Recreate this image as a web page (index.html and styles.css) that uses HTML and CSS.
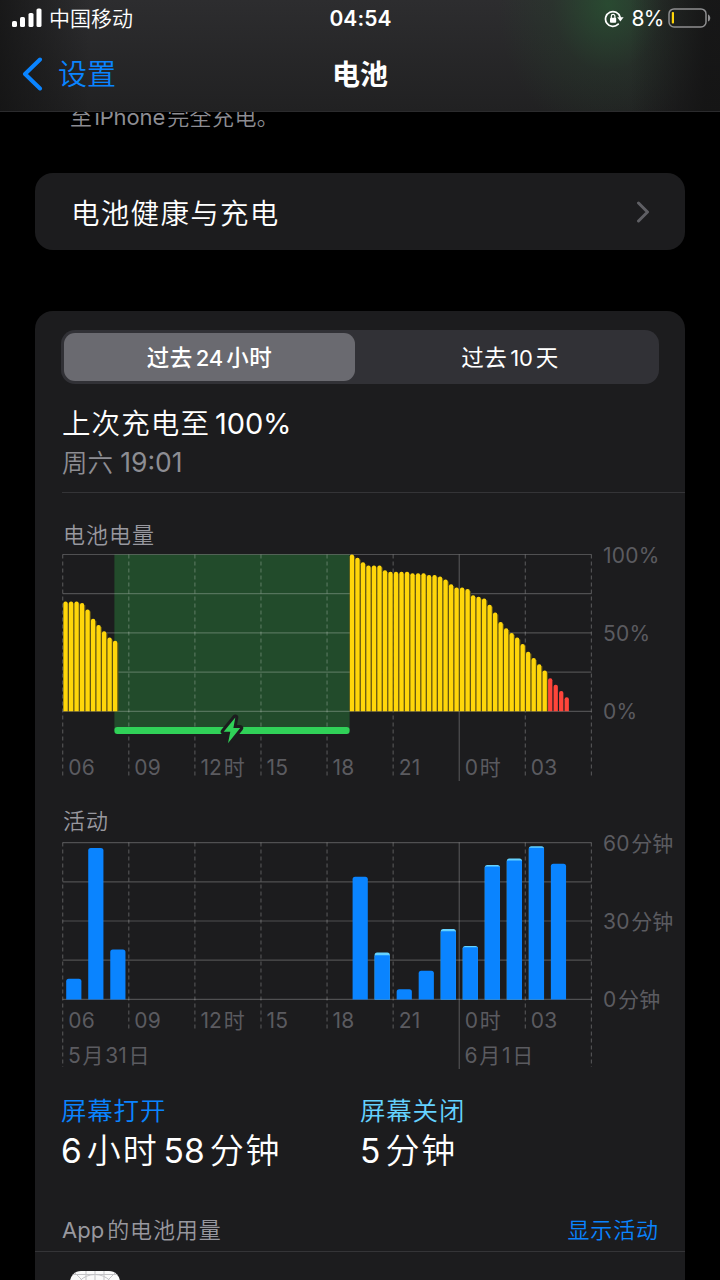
FILE: index.html
```html
<!DOCTYPE html>
<html lang="zh-CN">
<head>
    <meta charset="UTF-8">
    <meta name="viewport" content="width=device-width, initial-scale=1.0">
    <title>电池</title>
    <link rel="stylesheet" href="styles.css">
</head>
<body>
    <header class="header">
        <div class="status-bar">
            <div class="carrier">
                <svg class="signal" width="30" height="20" viewBox="0 0 30 20">
                    <rect x="0" y="13" width="5" height="6" rx="1.6"/>
                    <rect x="8" y="9" width="5" height="10" rx="1.6"/>
                    <rect x="16.5" y="5" width="5" height="14" rx="1.6"/>
                    <rect x="24.5" y="0.5" width="5" height="18.5" rx="1.6"/>
                </svg>
                <span>中国移动</span>
            </div>
            <div class="time">04:54</div>
            <div class="status-right">
                <svg class="lock" width="20" height="20" viewBox="0 0 20 20">
                    <path d="M14.2 15.2A7.4 7.4 0 1 1 16.1 8.2" fill="none" stroke="#fff" stroke-width="1.7" stroke-linecap="round"/>
                    <path d="M13.2 8.2h6.4l-3.2 4.2z" fill="#fff"/>
                    <rect x="6" y="8.8" width="6.2" height="5" rx="1" fill="#fff"/>
                    <path d="M7.3 9V7.2a1.8 1.8 0 0 1 3.6 0V9" fill="none" stroke="#fff" stroke-width="1.2"/>
                </svg>
                <span class="percent">8%</span>
                <svg class="battery" width="44" height="20" viewBox="0 0 44 20">
                    <rect x="1" y="0.9" width="37" height="18" rx="5" fill="none" stroke="#8e8e90" stroke-width="1.5"/>
                    <rect x="3.8" y="4" width="2.2" height="11.5" rx="0.8" fill="#ffd60a"/>
                    <path d="M40 6.5c3 1 3 6 0 7z" fill="#8e8e90"/>
                </svg>
            </div>
        </div>
        <nav class="nav-bar">
            <a class="back">
                <svg width="22" height="34" viewBox="0 0 22 34">
                    <path d="M19 2.5L4 17l15 14.5" fill="none" stroke="#0a84ff" stroke-width="4" stroke-linecap="round" stroke-linejoin="round"/>
                </svg>
                <span>设置</span>
            </a>
            <h1>电池</h1>
        </nav>
    </header>

    <main class="content">
        <p class="note">至<span class="latin">iPhone</span>完全充电。</p>

        <a class="card health">
            <span>电池健康与充电</span>
            <svg width="14" height="22" viewBox="0 0 14 22">
                <path d="M2.5 2l9 9-9 9" fill="none" stroke="#5f5f64" stroke-width="3" stroke-linecap="round" stroke-linejoin="round"/>
            </svg>
        </a>

        <section class="card usage">
            <div class="segmented">
                <button class="segment active">过去<span class="latin">24</span>小时</button>
                <button class="segment">过去<span class="latin">10</span>天</button>
            </div>

            <div class="last-charge">
                <h2>上次充电至<span class="latin">100%</span></h2>
                <p>周六 <span class="clock">19:01</span></p>
            </div>

            <h3 class="chart-title level-title">电池电量</h3>
            <svg class="chart" id="levelChart" width="623" height="240" viewBox="62 550 623 240"></svg>

            <h3 class="chart-title">活动</h3>
            <svg class="chart activity" id="activityChart" width="623" height="240" viewBox="62 836 623 240"></svg>

            <div class="screen-time">
                <div class="screen-on">
                    <h4>屏幕打开</h4>
                    <p><span class="num">6</span>小时<span class="num mid">58</span>分钟</p>
                </div>
                <div class="screen-off">
                    <h4>屏幕关闭</h4>
                    <p><span class="num">5</span>分钟</p>
                </div>
            </div>

            <div class="app-usage">
                <span><span class="app">App</span>的电池用量</span>
                <a>显示活动</a>
            </div>
            <div class="app-row">
                <svg class="app-icon" width="50" height="50" viewBox="0 0 50 50">
                    <rect width="50" height="50" fill="#fafafa"/>
                    <g fill="none" stroke="#c3c3c6" stroke-width="1">
                        <path d="M0 3.5h50M0 16h50M16 0v50M25 0v50M34 0v50M3 0l47 47M47 0L0 47"/>
                        <circle cx="25" cy="25" r="21.5"/>
                        <circle cx="25" cy="25" r="13"/>
                    </g>
                </svg>
            </div>
        </section>
    </main>

    <script src="script.js"></script>
</body>
</html>
```
FILE: styles.css
```css
* {
    margin: 0;
    padding: 0;
    box-sizing: border-box;
}

body {
    width: 720px;
    height: 1280px;
    background: #000;
    color: #fff;
    font-family: Inter, 'Noto Sans CJK SC', sans-serif;
    font-weight: 350;
    overflow: hidden;
}

/* header */
.header {
    position: relative;
    z-index: 1;
    height: 112px;
    border-bottom: 1px solid #2b2b2d;
    background:
        linear-gradient(90deg, rgba(18, 18, 18, 0.75), transparent 90px, transparent 630px, rgba(18, 18, 18, 0.8) 705px),
        radial-gradient(ellipse 110px 135px at 608px 4px, rgba(40, 84, 50, 0.75), rgba(38, 66, 44, 0.3) 50%, transparent),
        linear-gradient(#2d2d2f, #212122);
}

.status-bar {
    display: grid;
    grid-template-columns: 1fr auto 1fr;
    align-items: center;
    height: 37px;
    padding: 0 8px 0 12px;
}

.carrier {
    display: flex;
    align-items: center;
    gap: 7px;
    font-size: 21px;
    line-height: 37px;
}

.signal {
    fill: #fff;
    margin-top: -1px;
}

.time {
    margin-right: 3px;
    font-size: 21px;
    font-weight: 600;
    letter-spacing: 0.1px;
}

.status-right {
    display: flex;
    justify-content: flex-end;
    align-items: center;
}

.lock {
    margin-top: 1px;
}

.percent {
    margin: 0 4px 0 7px;
    font-size: 21px;
    font-weight: 400;
    letter-spacing: -0.5px;
}

.battery {
    margin-top: -2px;
}

.nav-bar {
    display: grid;
    grid-template-columns: 1fr auto 1fr;
    align-items: center;
    height: 73px;
    padding: 0 21px;
}

.back {
    display: flex;
    align-items: center;
    gap: 15px;
    color: #0a84ff;
    font-size: 29px;
    line-height: 40px;
}

.back span {
    margin-top: 2px;
}

h1 {
    margin-top: 2px;
    font-size: 28px;
    font-weight: 700;
    line-height: 40px;
}

/* content */
.content {
    padding: 0 35px;
}

.note {
    height: 61px;
    margin-top: -10px;
    padding-left: 35px;
    color: #8d8d93;
    font-size: 22px;
    line-height: 31px;
    letter-spacing: 0.4px;
}

.note .latin {
    font-weight: 400;
    letter-spacing: -0.1px;
}

.card {
    background: #1c1c1e;
    border-radius: 18px;
}

.note + .card {
    margin-top: 10px;
}

.latin {
    margin: 0 2px;
}

.health {
    display: flex;
    justify-content: space-between;
    align-items: center;
    height: 77px;
    padding: 0 35px 0 36px;
    font-size: 28.5px;
    letter-spacing: 1.3px;
}

.usage {
    height: 1000px;
    margin-top: 61px;
    padding: 19px 0 0 26px;
}

.segmented {
    display: grid;
    grid-template-columns: 291px 1fr;
    width: 598px;
    height: 54px;
    padding: 3px;
    border-radius: 14px;
    background: #313136;
}

.segment {
    padding-bottom: 3px;
    border: none;
    border-radius: 11px;
    background: transparent;
    color: #fff;
    font: inherit;
    font-size: 22.5px;
    letter-spacing: 0.5px;
}

.segment:last-child {
    padding-left: 9px;
    font-weight: 400;
}

.segment .latin {
    margin: 0 3px;
    font-size: 22px;
    letter-spacing: -0.2px;
}

.segment.active {
    background: #6a6a70;
    font-weight: 500;
}

.last-charge {
    height: 109px;
    margin-left: 1px;
    padding-top: 20px;
    border-bottom: 1px solid #343437;
}

.last-charge h2 {
    font-size: 28.5px;
    font-weight: inherit;
    line-height: 40px;
    letter-spacing: 1.1px;
}

.last-charge h2 .latin {
    margin-left: 5px;
    font-size: 29px;
    font-weight: 400;
    letter-spacing: -0.1px;
}

.last-charge p {
    color: #8d8d93;
    font-size: 25.5px;
    line-height: 37px;
}

.clock {
    font-size: 26.5px;
    font-weight: 400;
}

.chart-title {
    height: 30px;
    padding-left: 2px;
    color: #98989f;
    font-size: 22px;
    font-weight: inherit;
    line-height: 30px;
    letter-spacing: 1px;
}

.level-title {
    margin-top: 27px;
}

.chart {
    display: block;
    margin: 0 0 16px 1px;
    overflow: visible;
}

.chart text {
    fill: #5b5b60;
    font-size: 21px;
    font-weight: 400;
    letter-spacing: 0.2px;
}

.activity {
    margin-bottom: 0;
}

.grid-line {
    stroke: rgba(255, 255, 255, 0.23);
    stroke-width: 1.2;
}

.dashed {
    stroke-dasharray: 4 3;
}

/* screen time */
.screen-time {
    display: grid;
    grid-template-columns: 299px 1fr;
    padding-top: 16px;
}

.screen-time h4 {
    font-size: 25.5px;
    font-weight: inherit;
    line-height: 37px;
    letter-spacing: 0.8px;
}

.screen-time p {
    font-size: 34px;
    line-height: 43px;
    letter-spacing: 1.9px;
}

.num {
    margin-right: 5px;
    font-size: 33.5px;
    font-weight: 400;
    letter-spacing: 0;
}

.num.mid {
    margin-left: 5px;
}

.screen-on h4 {
    color: #0a84ff;
}

.screen-off h4 {
    color: #64d2ff;
}

.app-usage {
    display: flex;
    justify-content: space-between;
    height: 79px;
    margin-left: -26px;
    padding: 42px 26px 0 27px;
    border-bottom: 1px solid #343437;
    color: #98989f;
    font-size: 22px;
    line-height: 30px;
    letter-spacing: 0.9px;
}

.app {
    margin-right: 3px;
    font-weight: 400;
    letter-spacing: 0;
}

.app-usage a {
    color: #0a84ff;
}

.app-row {
    padding: 19px 0 0 9px;
}

.app-icon {
    border-radius: 11px;
}
```
FILE: script.js
```javascript
const LEFT = 62.7;
const HOUR = 22.03;

// уровень заряда, шаг 15 минут
const morning = [70, 70, 70, 69, 65, 59, 55, 51, 47, 45];
const evening = [
    100, 98, 95, 93, 93, 93, 90, 89, 89, 89, 89, 88, 88, 88, 87, 87, 86, 84, 81, 79,
    79, 78, 74, 73, 72, 68, 63, 57, 53, 50, 47, 43, 38, 34, 30, 26, 21, 17, 13, 9
];

// [час, минуты всего, минуты с выключенным экраном]
const activity = [
    [0, 8, 0], [1, 58, 0], [2, 19.2, 0], [13, 47, 0], [14, 18, 1], [15, 4, 0],
    [16, 11, 0], [17, 27, 0.8], [18, 20.5, 0.5], [19, 51.5, 0.6], [20, 54, 0.8],
    [21, 58.7, 0.6], [22, 52, 0]
];

const hours = ['06', '09', '12时', '15', '18', '21', '0时', '03', ''];

function line(x1, y1, x2, y2, dashed) {
    return `<line class="grid-line${dashed ? ' dashed' : ''}" x1="${x1}" y1="${y1}" x2="${x2}" y2="${y2}"/>`;
}

function text(x, y, value) {
    // отступ между цифрами и иероглифами
    const parts = value.split(/(\d+%?)/).filter(Boolean);
    return `<text x="${x}" y="${y}">` + parts.map((p, i) =>
        `<tspan${i ? ' dx="1.5"' : ''}>${p}</tspan>`).join('') + '</text>';
}

function bar(x, y, w, h, r, color) {
    return `<path d="M${x} ${y + h}v${r - h}q0 ${-r} ${r} ${-r}h${w - 2 * r}q${r} 0 ${r} ${r}v${h - r}z" fill="${color}"/>`;
}

function grid(top, bottoms, labelY) {
    let out = '';
    for (let i = 0; i < 5; i++) {
        const y = top + i * 39.2;
        out += line(LEFT, y, LEFT + HOUR * 24, y);
    }
    hours.forEach((label, i) => {
        const x = LEFT + i * HOUR * 3;
        out += line(x, top, x, bottoms[i], i !== 6);
        if (label) out += text(x + 5.5, labelY, label);
    });
    return out;
}

function drawLevel() {
    const base = 711.3;
    let out = '<rect x="114.4" y="554.5" width="235.2" height="176" fill="#224b2b"/>';
    out += grid(554.5, [778, 778, 778, 778, 778, 778, 781, 778, 778], 775);
    const draw = (values, start) => values.forEach((v, i) => {
        const x = LEFT + (start + i) * HOUR / 4 + 0.7;
        const h = v * 1.568;
        const color = v <= 21 ? '#ff453a' : '#ffd60a';
        if (v > 21) {
            out += `<rect x="${x}" y="${base - h + 2}" width="5.5" height="${h - 2}" fill="#5e5114"/>`;
        }
        out += bar(x, base - h, 4.3, h, 2, color);
    });
    draw(morning, 0);
    draw(evening, 52);
    out += '<rect x="114.4" y="727" width="235.2" height="7" rx="3" fill="#30d158"/>';
    out += '<path d="M235.3 717.5l-11.6 14.2h6.6l-2.3 11.6 12.2-15.2h-6.8z" fill="#30d158" stroke="#1c1c1e" stroke-width="6" stroke-linejoin="round" paint-order="stroke"/>';
    out += text(603, 563, '100%') + text(603, 641, '50%') + text(603, 719, '0%');
    document.getElementById('levelChart').innerHTML = out;
}

function drawActivity() {
    const base = 999.6;
    let out = grid(842.6, [1067, 1031, 1031, 1031, 1031, 1031, 1069, 1031, 1067], 1028);
    activity.forEach(([hour, total, off]) => {
        const x = LEFT + hour * HOUR + 3.5;
        const h = total * 2.613;
        if (off) out += bar(x, base - h, 15.2, h, 2.5, '#64d2ff');
        const on = h - off * 2.613;
        out += bar(x, base - on, 15.2, on, off ? 1 : 2.5, '#0a84ff');
    });
    out += text(68, 1063, '5月31日') + text(464.5, 1063, '6月1日');
    out += text(603, 851, '60分钟') + text(603, 929, '30分钟') + text(603, 1007, '0分钟');
    document.getElementById('activityChart').innerHTML = out;
}

drawLevel();
drawActivity();
```
